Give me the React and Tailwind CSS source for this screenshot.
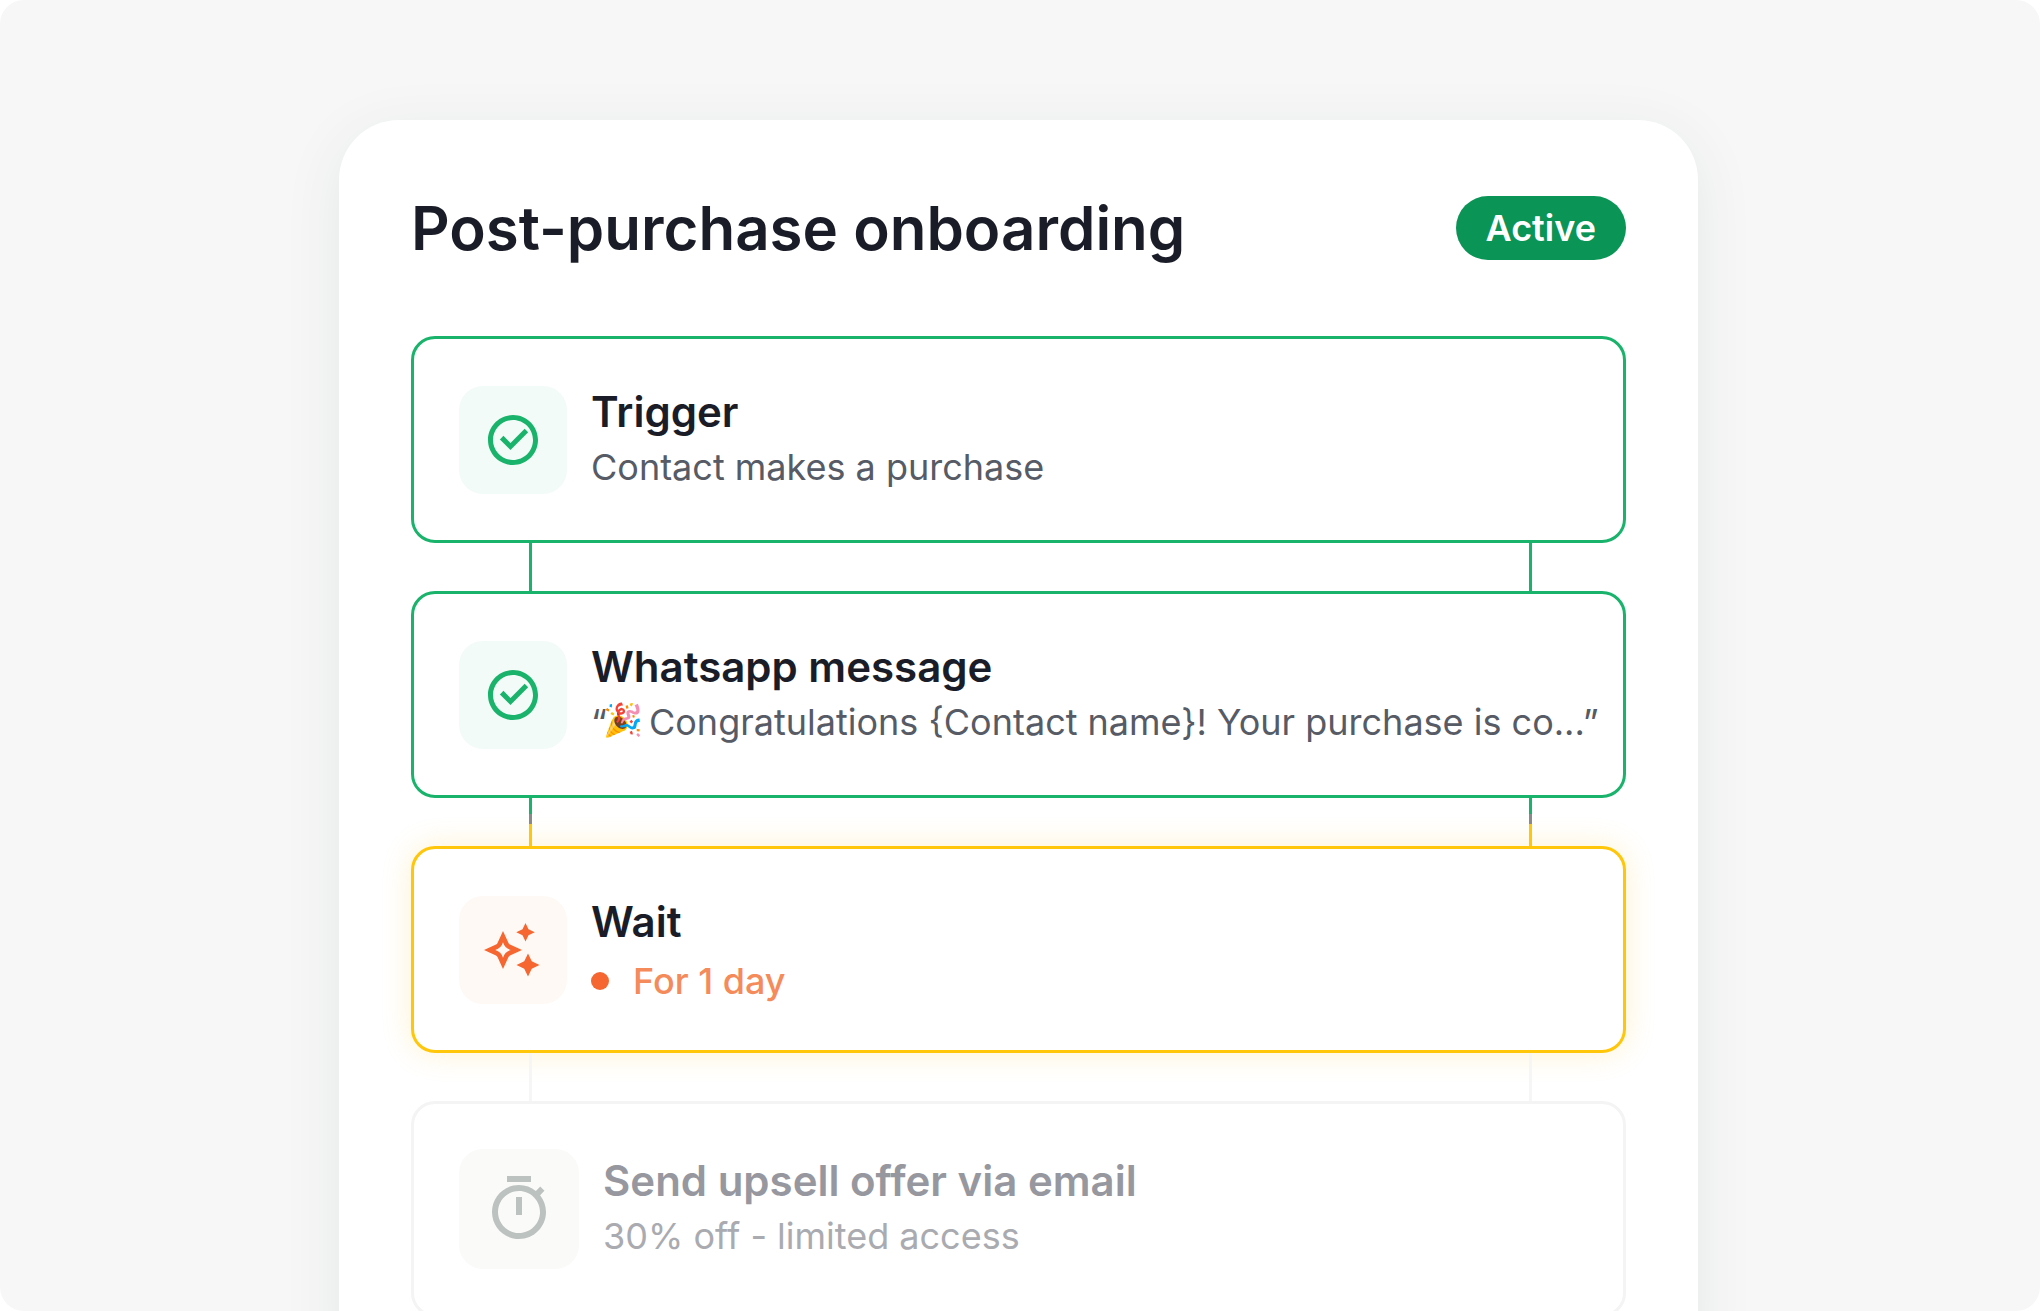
import { RiCheckboxCircleLine, RiTimerLine } from "react-icons/ri";

const steps = [
  {
    id: "trigger",
    status: "done",
    title: "Trigger",
    text: "Contact makes a purchase",
  },
  {
    id: "whatsapp",
    status: "done",
    title: "Whatsapp message",
    text: (
      <span>
        “<span className="-mx-1 align-text-top text-[32px] leading-10">🎉</span>{" "}
        Congratulations {"{Contact name}"}! Your purchase is co...”
      </span>
    ),
  },
  {
    id: "wait",
    status: "current",
    title: "Wait",
    text: "For 1 day",
  },
  {
    id: "upsell",
    status: "pending",
    title: "Send upsell offer via email",
    text: "30% off - limited access",
  },
];

const statusStyles = {
  done: {
    card: "border-[#1ab36c] pt-[47px] pb-[46px]",
    icon: "size-[108px] bg-[#f2fbf7] text-[#1ab36c]",
    title: "text-[#1a1d28]",
    text: "text-[#565b65] leading-[52px]",
  },
  current: {
    card: "border-[#ffc60a] pt-[47px] pb-[46px] shadow-[0_0_30px_rgba(255,190,20,0.2)]",
    icon: "size-[108px] bg-[#fef9f5] text-[#f56630]",
    title: "text-[#1a1d28]",
    text: "text-[#f58a5b] leading-[60px] font-medium",
  },
  pending: {
    card: "border-[#f4f4f4] py-[45px]",
    icon: "size-[120px] bg-[#fafaf9] text-[#bcc2c0]",
    title: "text-[#97989f]",
    text: "text-[#a9abb0] leading-[52px]",
  },
};

// line colour depends on the step the connector leads to
const connectorStyles = {
  done: "bg-[#1ab36c]",
  current:
    "bg-[linear-gradient(#1ab36c_0_16px,#8a8a8a_16px_26px,#ffc60a_26px)]",
  pending: "bg-[#f6f6f6]",
};

export default function App() {
  return (
    <div className="bg-white font-['Inter',sans-serif]">
      <main className="grid h-screen grid-cols-[113fr_453fr_114fr] items-start overflow-hidden rounded-3xl bg-[#f7f7f7] pt-[120px]">
        <section className="col-start-2 min-w-0 rounded-[60px] bg-white p-[72px] shadow-[0_12px_60px_rgba(30,60,50,0.08)]">
          <header className="mb-[72px] flex items-center justify-between">
            <h1 className="text-[60px] leading-[72px] font-semibold text-[#1a1d28]">
              Post-purchase onboarding
            </h1>
            <span className="rounded-full bg-[#0a9456] px-[30px] text-[36px] leading-[64px] font-semibold text-white">
              Active
            </span>
          </header>

          <ol>
            {steps.map((step, i) => (
              <li key={step.id}>
                {i > 0 && <Connector status={step.status} />}
                <StepCard step={step} />
              </li>
            ))}
          </ol>
        </section>
      </main>
    </div>
  );
}

/* ---------- sub-components ---------- */

function StepCard({ step }) {
  const styles = statusStyles[step.status];

  return (
    <article
      className={`flex items-center gap-6 rounded-3xl border-[3px] bg-white pr-6 pl-[45px] ${styles.card}`}
    >
      <div
        className={`flex shrink-0 items-center justify-center rounded-3xl ${styles.icon}`}
      >
        <StepIcon status={step.status} />
      </div>
      <div className="flex h-[106px] flex-col gap-1 whitespace-nowrap">
        <h2 className={`text-[42px] leading-[50px] font-semibold ${styles.title}`}>
          {step.title}
        </h2>
        <p className={`flex items-center gap-6 text-[36px] ${styles.text}`}>
          {step.status === "current" && (
            <span className="size-[18px] rounded-full bg-[#f56630]" />
          )}
          {step.text}
        </p>
      </div>
    </article>
  );
}

function StepIcon({ status }) {
  if (status === "done") return <RiCheckboxCircleLine size={60} />;
  if (status === "pending") return <RiTimerLine size={72} />;
  return <SparkleIcon />;
}

function SparkleIcon() {
  return (
    <svg width="60" height="60" viewBox="0 0 24 24" fill="currentColor">
      <path
        fillRule="evenodd"
        d="M8 4.4L10.2 9.2Q10.4 9.6 10.8 9.8L15.6 12L10.8 14.2Q10.4 14.4 10.2 14.8L8 19.6L5.8 14.8Q5.6 14.4 5.2 14.2L.4 12L5.2 9.8Q5.6 9.6 5.8 9.2ZM8 8.9Q7.3 11.3 4.9 12Q7.3 12.7 8 15.1Q8.7 12.7 11.1 12Q8.7 11.3 8 8.9Z"
      />
      <path d="M17 1.2L18.2 3.7L20.7 4.9L18.2 6.1L17 8.6L15.8 6.1L13.3 4.9L15.8 3.7Z" />
      <path d="M18 13.4L19.5 16.5L22.6 18L19.5 19.5L18 22.6L16.5 19.5L13.4 18L16.5 16.5Z" />
    </svg>
  );
}

function Connector({ status }) {
  return (
    <div className="flex h-12 justify-between pr-[94px] pl-[118px]">
      <span className={`w-[3px] ${connectorStyles[status]}`} />
      <span className={`w-[3px] ${connectorStyles[status]}`} />
    </div>
  );
}
